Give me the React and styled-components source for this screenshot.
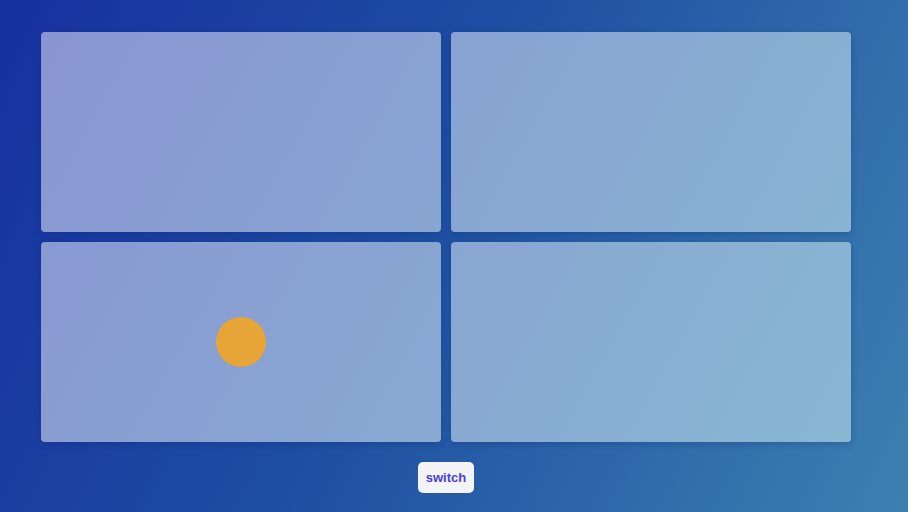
import React, { useState } from 'react';
import styled, { createGlobalStyle } from 'styled-components';

const GlobalStyle = createGlobalStyle`
  html, body {
    margin: 0;
    padding: 0;
    width: 100%;
    height: 100%;
    overflow: hidden;
  }
  body {
    font-family: "Liberation Sans", Arial, sans-serif;
  }
`;

const Page = styled.div`
  width: 908px;
  height: 512px;
  box-sizing: border-box;
  padding: 32px 0 0 41px;
  background: linear-gradient(115deg, #1730a0 0%, #1d4ea2 45%, #2f6aab 75%, #3d80b0 100%);
`;

const Stage = styled.div`
  width: 810px;
  display: flex;
  flex-direction: column;
  align-items: center;
  gap: 20px;
`;

const Grid = styled.div`
  display: grid;
  grid-template-columns: repeat(2, 400px);
  grid-auto-rows: 200px;
  gap: 10px;
`;

const Tile = styled.div`
  position: relative;
  display: flex;
  align-items: center;
  justify-content: center;
  border-radius: 4px;
  background: linear-gradient(120deg, rgba(150, 160, 215, 0.9), rgba(145, 190, 215, 0.9));
  background-size: 810px 410px;
  background-position: ${(p) => `-${p.$col * 410}px -${p.$row * 210}px`};
  box-shadow: 0 2px 6px rgba(10, 30, 90, 0.25);
`;

const Ball = styled.div`
  width: 50px;
  height: 50px;
  border-radius: 50%;
  background: #e8a537;
`;

const SwitchButton = styled.button`
  height: 31px;
  padding: 0 8px;
  border: none;
  border-radius: 5px;
  background: #f4f4f8;
  color: #4a3fd6;
  font-family: "Liberation Sans", Arial, sans-serif;
  font-weight: 700;
  font-size: 13px;
  cursor: pointer;
`;

export default function App() {
  const [active, setActive] = useState(2);
  const tiles = [0, 1, 2, 3];

  return (
    <>
      <GlobalStyle />
      <Page>
        <Stage>
          <Grid>
            {tiles.map((i) => (
              <Tile key={i} $col={i % 2} $row={Math.floor(i / 2)}>
                {active === i && <Ball />}
              </Tile>
            ))}
          </Grid>
          <SwitchButton onClick={() => setActive((a) => (a + 1) % 4)}>switch</SwitchButton>
        </Stage>
      </Page>
    </>
  );
}
